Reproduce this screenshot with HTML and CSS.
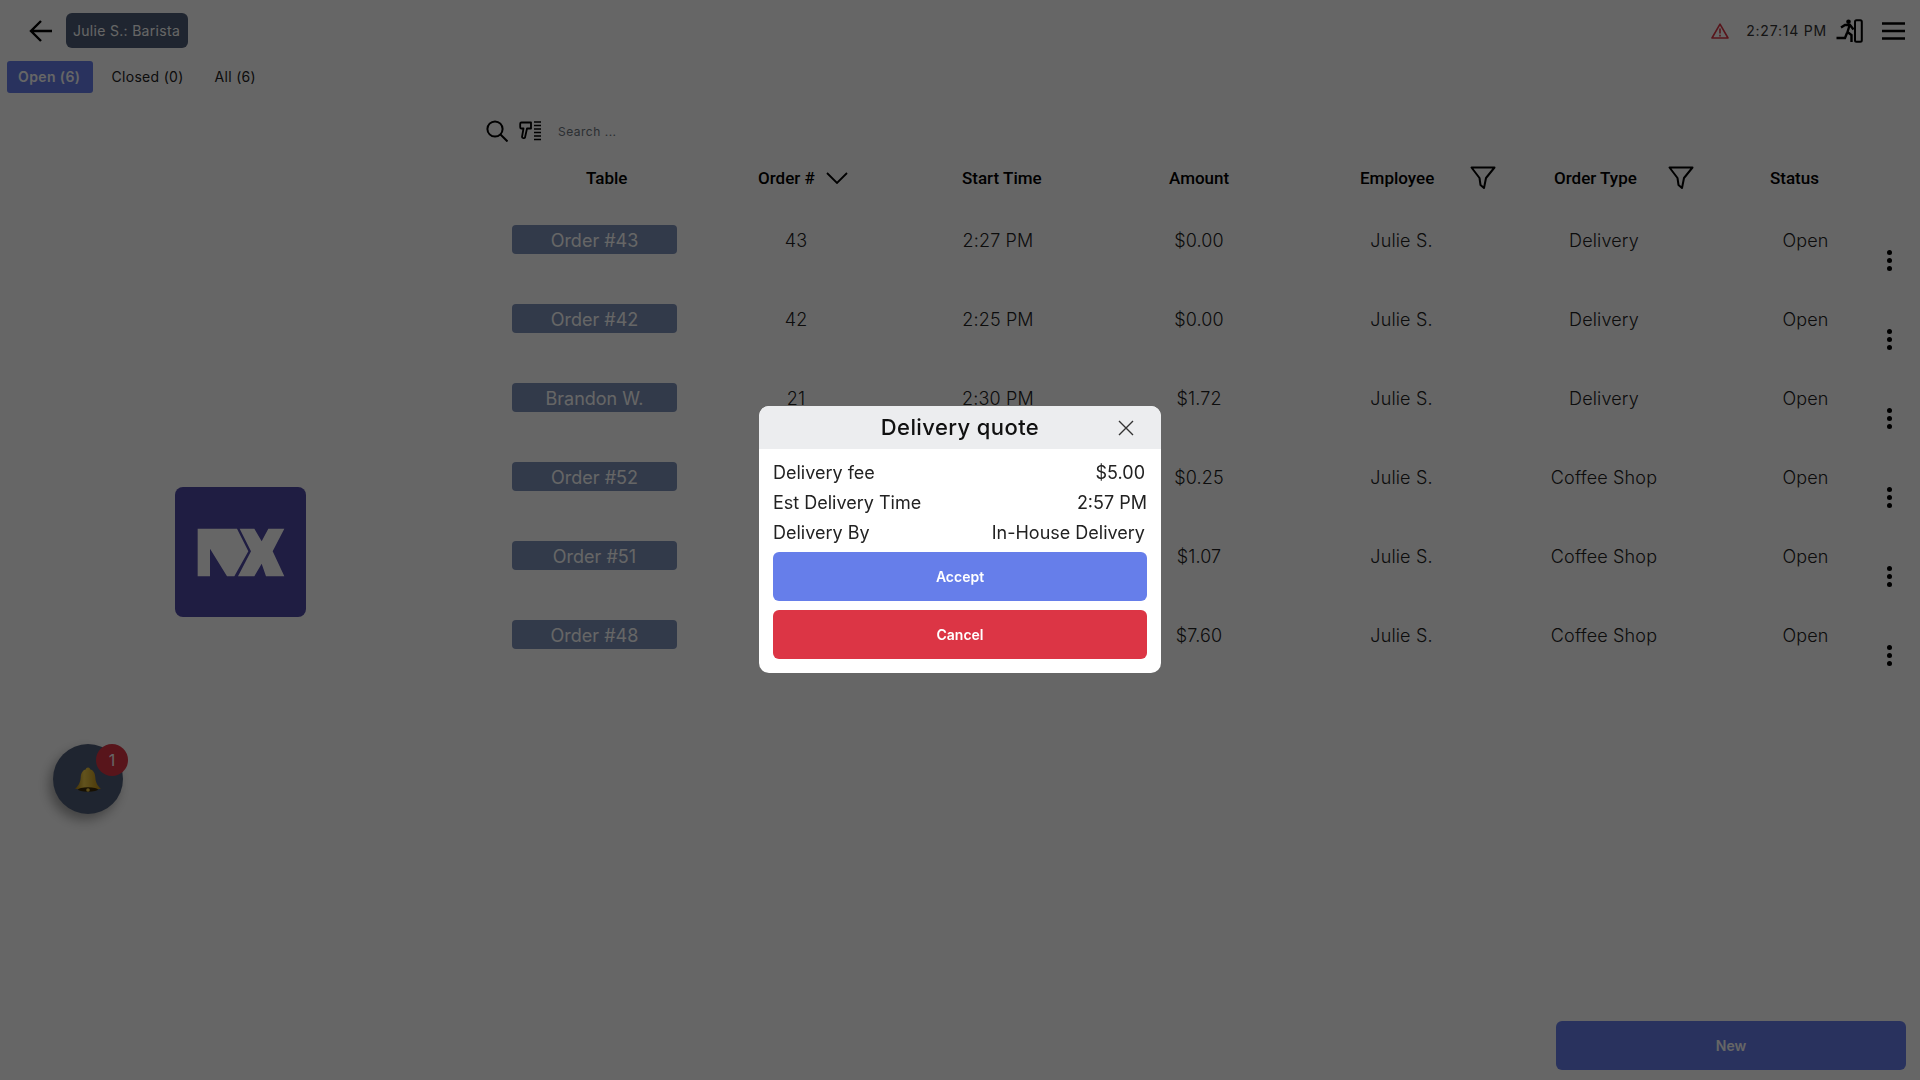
FILE: index.html
```html
<!DOCTYPE html>
<html lang="en">
<head>
    <meta charset="UTF-8">
    <title>Orders</title>
    <link rel="stylesheet" href="styles.css">
</head>
<body>
    <div class="page">
        <header class="topbar">
            <div class="topbar-left">
                <svg class="back" viewBox="0 0 24 24" width="24" height="24"><path d="M23 12H2M12 2L2 12l10 10" fill="none" stroke="#000" stroke-width="2.4"/></svg>
                <span class="user-tag">Julie S.: Barista</span>
            </div>
            <div class="topbar-right">
                <svg class="warn" viewBox="0 0 18 16" width="18" height="16"><path d="M9 1.2L1 15h16z" fill="none" stroke="#dc3545" stroke-width="1.6" stroke-linejoin="round"/><path d="M9 5.5v5M9 11.8v1.6" stroke="#dc3545" stroke-width="1.6"/></svg>
                <span class="clock">2:27:14 PM</span>
                <svg class="exit" viewBox="0 0 27 24" width="27" height="24"><rect x="19" y="1.2" width="6.8" height="21.6" rx="1.5" fill="none" stroke="#000" stroke-width="2"/><circle cx="12.500" cy="2.800" r="2.300"/><path d="M5 8.500L9 6h5l3.500 4.500M13.500 6.500l-2 6.500 4 3v7M11 14l-2 5H0.500" fill="none" stroke="#000" stroke-width="2.400"/></svg>
                <svg class="menu" viewBox="0 0 23 18" width="23" height="18"><path d="M0 1.500h23M0 9h23M0 16.500h23" stroke="#000" stroke-width="2.600"/></svg>
            </div>
        </header>

        <nav class="tabs">
            <a class="tab active">Open (6)</a>
            <a class="tab">Closed (0)</a>
            <a class="tab">All (6)</a>
        </nav>

        <main class="content">
            <aside class="side">
                <div class="logo">
                    <svg viewBox="0 5 300 210" width="100" height="70">
                        <polygon fill="#fff" points="20,40 138,40 172,108 130,183 108,183 57,100 57,183 20,183"/>
                        <polygon fill="#fff" points="146,40 190,40 212,78 232,40 280,40 245,108 280,183 225,183 212,145 190,183 141,183 180,108"/>
                    </svg>
                </div>
            </aside>

            <section class="orders">
                <div class="search">
                    <svg viewBox="0 0 22 22" width="22" height="22"><circle cx="9" cy="9" r="7.600" fill="none" stroke="#000" stroke-width="2"/><path d="M14.500 14.500l7 7" stroke="#000" stroke-width="2"/></svg>
                    <svg viewBox="0 0 22 20" width="22" height="20"><path d="M2.500 1.500h9.500v6H8L6 16.500c-.3 1-3 .8-3-.5L4.500 7.500H2.500c-.8 0-1.300-.5-1.300-1.300V2.800c0-.8.500-1.300 1.300-1.300z" fill="none" stroke="#000" stroke-width="1.800" stroke-linejoin="round"/><path d="M15 1h7M15 4.500h7M15 8h7M15 11.500h7M15 15h7M15 18.500h7" stroke="#000" stroke-width="1.600"/></svg>
                    <span class="search-text">Search ...</span>
                </div>

                <div class="thead">
                    <div class="th">Table</div>
                    <div class="th">Order #
                        <svg class="sort" viewBox="0 0 22 12" width="22" height="12"><path d="M1 1l10 10L21 1" fill="none" stroke="#000" stroke-width="1.800"/></svg>
                    </div>
                    <div class="th">Start Time</div>
                    <div class="th">Amount</div>
                    <div class="th">Employee
                        <svg class="funnel" viewBox="0 0 26 24" width="26" height="24"><path d="M1.500 1.500h23L16 12l-2 10-3.500-3-1-7z" fill="none" stroke="#000" stroke-width="2" stroke-linejoin="round"/></svg>
                    </div>
                    <div class="th">Order Type
                        <svg class="funnel type" viewBox="0 0 26 24" width="26" height="24"><path d="M1.500 1.500h23L16 12l-2 10-3.500-3-1-7z" fill="none" stroke="#000" stroke-width="2" stroke-linejoin="round"/></svg>
                    </div>
                    <div class="th">Status</div>
                </div>

                <div class="row">
                    <div><span class="order-btn">Order #43</span></div>
                    <div>43</div><div>2:27 PM</div><div>$0.00</div><div>Julie S.</div><div>Delivery</div><div class="status">Open</div>
                    <div class="kebab"><i></i><i></i><i></i></div>
                </div>
                <div class="row">
                    <div><span class="order-btn">Order #42</span></div>
                    <div>42</div><div>2:25 PM</div><div>$0.00</div><div>Julie S.</div><div>Delivery</div><div class="status">Open</div>
                    <div class="kebab"><i></i><i></i><i></i></div>
                </div>
                <div class="row">
                    <div><span class="order-btn">Brandon W.</span></div>
                    <div>21</div><div>2:30 PM</div><div>$1.72</div><div>Julie S.</div><div>Delivery</div><div class="status">Open</div>
                    <div class="kebab"><i></i><i></i><i></i></div>
                </div>
                <div class="row">
                    <div><span class="order-btn">Order #52</span></div>
                    <div></div><div></div><div>$0.25</div><div>Julie S.</div><div>Coffee Shop</div><div class="status">Open</div>
                    <div class="kebab"><i></i><i></i><i></i></div>
                </div>
                <div class="row">
                    <div><span class="order-btn">Order #51</span></div>
                    <div></div><div></div><div>$1.07</div><div>Julie S.</div><div>Coffee Shop</div><div class="status">Open</div>
                    <div class="kebab"><i></i><i></i><i></i></div>
                </div>
                <div class="row">
                    <div><span class="order-btn">Order #48</span></div>
                    <div></div><div></div><div>$7.60</div><div>Julie S.</div><div>Coffee Shop</div><div class="status">Open</div>
                    <div class="kebab"><i></i><i></i><i></i></div>
                </div>
            </section>
        </main>

        <footer class="footer">
            <button class="new-btn">New</button>
        </footer>
    </div>

    <div class="bell">
        <svg viewBox="0 0 28 28" width="28" height="28">
            <defs>
                <linearGradient id="gold" x1="0" y1="0" x2="1" y2="0">
                    <stop offset="0" stop-color="#a87c10"/>
                    <stop offset="0.35" stop-color="#f4cf4a"/>
                    <stop offset="1" stop-color="#b98a14"/>
                </linearGradient>
            </defs>
            <path d="M14 1.500c1.300 0 2 .8 2 1.700 3.600 1 5 4 5.300 8.300.3 4 1.400 7.500 5.700 11.500H1C5.300 19 6.400 15.500 6.700 11.500 7 7.200 8.400 4.200 12 3.200c0-.9.700-1.700 2-1.700z" fill="url(#gold)"/>
            <ellipse cx="14" cy="23.500" rx="10" ry="2.200" fill="#3a2a05"/>
            <circle cx="14" cy="24" r="1.800" fill="#e8c040"/>
        </svg>
        <span class="bell-count">1</span>
    </div>

    <div class="backdrop">
        <div class="modal">
            <div class="modal-head">
                <span class="modal-title">Delivery quote</span>
                <svg class="modal-close" viewBox="0 0 16 16" width="16" height="16"><path d="M1 1l14 14M15 1L1 15" stroke="#333" stroke-width="1.400"/></svg>
            </div>
            <div class="modal-body">
                <div class="quote-line"><span>Delivery fee</span><span class="inset">$5.00</span></div>
                <div class="quote-line"><span>Est Delivery Time</span><span>2:57 PM</span></div>
                <div class="quote-line"><span>Delivery By</span><span class="inset">In-House Delivery</span></div>
                <button class="btn accept">Accept</button>
                <button class="btn cancel">Cancel</button>
            </div>
        </div>
    </div>
</body>
</html>
```

FILE: styles.css
```css
* {
    box-sizing: border-box;
}
body {
    margin: 0;
    background: #fff;
    font-family: Inter, "Noto Sans", sans-serif;
    color: #333;
    overflow: hidden;
}
.page {
    height: 100vh;
    display: flex;
    flex-direction: column;
}
.topbar {
    display: flex;
    justify-content: space-between;
    align-items: center;
    padding: 13px 15px 0 29px;
    height: 48px;
}
.topbar-left, .topbar-right {
    display: flex;
    align-items: center;
}
.user-tag {
    margin-left: 13px;
    background: #4e5d78;
    color: #fff;
    font-size: 14px;
    letter-spacing: 0.3px;
    border-radius: 6px;
    height: 35px;
    padding: 0 8px 0 7px;
    display: flex;
    align-items: center;
}
.clock {
    margin-left: 17px;
    font-size: 14px;
    letter-spacing: 0.8px;
    color: #333;
}
.exit {
    margin-left: 9px;
}
.menu {
    margin-left: 19px;
}
.tabs {
    display: flex;
    margin: 13px 0 0 7px;
    height: 32px;
}
.tab {
    font-size: 14px;
    letter-spacing: 0.3px;
    color: #222;
    padding: 0 11px 2px;
    margin-right: 9px;
    display: flex;
    align-items: center;
    border-radius: 3px;
}
.tab.active {
    background: #667eea;
    color: #fff;
    font-weight: 600;
    margin-right: 7px;
    letter-spacing: 0.4px;
    padding: 0 13px 2px 11px;
}
.content {
    flex: 1;
    display: flex;
}
.side {
    width: 490px;
    padding: 394px 0 0 175px;
}
.logo {
    width: 131px;
    height: 130px;
    background: #4e49a5;
    border-radius: 8px;
    display: flex;
    align-items: center;
    justify-content: center;
}
.orders {
    flex: 1;
}
.search {
    display: flex;
    align-items: center;
    height: 30px;
    margin-top: 23px;
    gap: 11px;
    margin-left: -4px;
}
.search-text {
    font-size: 12px;
    letter-spacing: 0.5px;
    color: #6c757d;
    margin-left: 6px;
}
.thead {
    display: grid;
    grid-template-columns: 172px 204px 207px 191px 194px 216px 1fr;
    padding-left: 96px;
    margin-top: 17px;
    height: 30px;
    align-items: center;
}
.th {
    display: flex;
    align-items: center;
    font-family: Roboto, sans-serif;
    font-weight: 500;
    font-size: 17px;
    color: #000;
    white-space: nowrap;
    padding-bottom: 1px;
}
.sort {
    margin-left: 11px;
}
.funnel {
    margin-left: 36px;
}
.funnel.type {
    margin-left: 31px;
}
.row {
    display: grid;
    grid-template-columns: 210px 192px 212px 190px 215px 190px 179px 21px;
    height: 79px;
    padding-top: 2px;
    align-items: center;
    text-align: center;
    font-size: 18px;
    line-height: 24px;
    font-weight: 300;
    letter-spacing: 0.15px;
    color: #222;
}
.thead + .row {
    margin-top: 7px;
}
.status {
    padding-left: 34px;
}
.order-btn {
    display: block;
    width: 165px;
    height: 29px;
    margin: -2px 0 0 22px;
    line-height: 31px;
    background: #7d91b9;
    color: #fff;
    border-radius: 4px;
    font-weight: 400;
    letter-spacing: 0;
}
.kebab {
    display: flex;
    flex-direction: column;
    align-items: center;
    gap: 3px;
    margin: 39px 0 0 1px;
}
.kebab i {
    width: 5px;
    height: 5px;
    background: #000;
    border-radius: 50%;
}
.footer {
    display: flex;
    justify-content: flex-end;
    padding: 0 14px 10px 0;
}
.new-btn {
    width: 350px;
    height: 49px;
    background: #667eea;
    color: #fff;
    font-family: inherit;
    font-size: 14px;
    font-weight: 600;
    border: none;
    border-radius: 6px;
}
.bell {
    position: absolute;
    left: 53px;
    top: 744px;
    width: 70px;
    height: 70px;
    border-radius: 50%;
    background: #4e5d78;
    box-shadow: -4px 6px 12px rgba(0,0,0,0.35);
    display: flex;
    align-items: center;
    justify-content: center;
    padding-top: 2px;
}
.bell-count {
    position: absolute;
    top: 0;
    right: -5px;
    width: 32px;
    height: 32px;
    border-radius: 50%;
    background: #dc3545;
    color: #fff;
    font-size: 16px;
    display: flex;
    align-items: center;
    justify-content: center;
}
.backdrop {
    position: fixed;
    inset: 0;
    background: rgba(0,0,0,0.6);
    display: flex;
    align-items: center;
    justify-content: center;
}
.modal {
    width: 402px;
    background: #fff;
    border-radius: 10px;
    overflow: hidden;
    margin-bottom: 1px;
}
.modal-head {
    position: relative;
    height: 43px;
    padding-bottom: 1px;
    background: #ecedef;
    display: flex;
    align-items: center;
    justify-content: center;
}
.modal-title {
    font-size: 22px;
    font-weight: 500;
    letter-spacing: 0.4px;
    color: #111;
}
.modal-close {
    position: absolute;
    right: 27px;
    top: 14px;
}
.modal-body {
    padding: 9px 14px 14px;
}
.quote-line {
    display: flex;
    justify-content: space-between;
    height: 30px;
    padding-bottom: 1px;
    align-items: center;
    font-size: 18px;
    color: #222;
}
.inset {
    margin-right: 2px;
}
.btn {
    display: block;
    width: 100%;
    height: 49px;
    border: none;
    border-radius: 6px;
    color: #fff;
    font-family: inherit;
    font-size: 14px;
    font-weight: 600;
    margin-top: 9px;
}
.btn.accept {
    background: #667eea;
    margin-top: 4px;
}
.btn.cancel {
    background: #dc3545;
}
```
